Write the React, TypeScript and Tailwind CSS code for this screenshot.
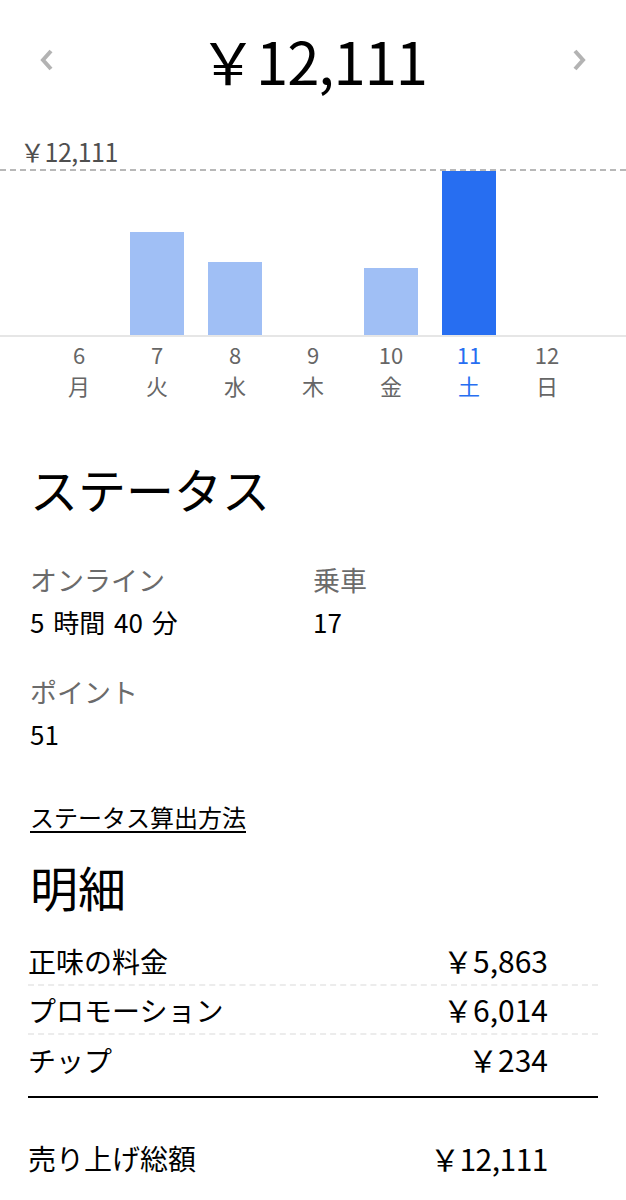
import React from 'react';

type Day = { num: string; name: string; amount: number };

const DAYS: Day[] = [
  { num: '6', name: '月', amount: 0 },
  { num: '7', name: '火', amount: 7600 },
  { num: '8', name: '水', amount: 5390 },
  { num: '9', name: '木', amount: 0 },
  { num: '10', name: '金', amount: 4950 },
  { num: '11', name: '土', amount: 12111 },
  { num: '12', name: '日', amount: 0 },
];

const MAX = 12111;
const CHART_H = 164;
const SELECTED = '11';

const BREAKDOWN = [
  { label: '正味の料金', value: '￥5,863' },
  { label: 'プロモーション', value: '￥6,014' },
  { label: 'チップ', value: '￥234' },
];

const Chevron: React.FC<{ dir: 'left' | 'right' }> = ({ dir }) => (
  <svg width="16" height="22" viewBox="0 0 16 22" fill="none">
    <polyline
      points={dir === 'left' ? '12,2 4,11 12,20' : '4,2 12,11 4,20'}
      stroke="#b3b3b3"
      strokeWidth="4"
      strokeLinejoin="miter"
    />
  </svg>
);

const Chart: React.FC = () => (
  <div className="mt-[17px]">
    <div className="pl-[20px] text-[25px] leading-[28px] text-[#4f4f4f] tracking-[-0.5px]">￥12,111</div>
    <div className="mt-[4px] flex items-end h-[166px] px-[40px] border-t-2 border-dashed border-[#b8b8b8]">
      {DAYS.map(d => (
        <div key={d.num} className="flex-1 flex justify-center">
          {d.amount > 0 && (
            <div
              className={d.num === SELECTED ? 'w-[54px] bg-[#276ef1]' : 'w-[54px] bg-[#a0bff5]'}
              style={{ height: Math.round((d.amount / MAX) * CHART_H) }}
            />
          )}
        </div>
      ))}
    </div>
    <div className="h-[2px] bg-[#e6e6e6]" />
    <div className="grid grid-cols-7 px-[40px] pt-[2px]">
      {DAYS.map(d => (
        <div
          key={d.num}
          className={`flex flex-col items-center text-[22px] leading-[31px] ${d.num === SELECTED ? 'text-[#276ef1]' : 'text-[#666666]'}`}
        >
          <span>{d.num}</span>
          <span>{d.name}</span>
        </div>
      ))}
    </div>
  </div>
);

const Stat: React.FC<{ label: string; value: string }> = ({ label, value }) => (
  <div>
    <div className="text-[27px] leading-[36px] text-[#6b6b6b]">{label}</div>
    <div className="text-[26px] leading-[36px] text-black mt-[6px] [word-spacing:3px]">{value}</div>
  </div>
);

export default function App() {
  return (
    <div className="w-[626px] min-h-[1200px] bg-white text-black" style={{ fontFamily: '"Noto Sans CJK JP", "Noto Sans", sans-serif' }}>
      {/* header */}
      <div className="flex items-center justify-between px-[39px] h-[120px]">
        <Chevron dir="left" />
        <span className="text-[58px] leading-none tracking-[-1px]">￥12,111</span>
        <Chevron dir="right" />
      </div>

      <Chart />

      {/* status */}
      <div className="px-[30px] pt-[57px]">
        <h2 className="text-[48px] leading-[60px]">ステータス</h2>
        <div className="grid grid-cols-2 gap-y-[34px] mt-[44px]">
          <Stat label="オンライン" value="5 時間 40 分" />
          <Stat label="乗車" value="17" />
          <Stat label="ポイント" value="51" />
        </div>
        <div className="mt-[49px]">
          <a className="text-[24px] leading-[32px] underline underline-offset-[4px] text-black">ステータス算出方法</a>
        </div>
      </div>

      {/* breakdown */}
      <div className="px-[28px] pt-[23px]">
        <h2 className="text-[48px] leading-[60px] pl-[2px]">明細</h2>
        <div className="mt-[21px]">
          {BREAKDOWN.map((row, i) => (
            <div
              key={row.label}
              className={`flex justify-between items-center h-[49px] pr-[50px] ${i < BREAKDOWN.length - 1 ? 'border-b-2 border-dashed border-[#ececec]' : ''}`}
            >
              <span className="text-[28px]">{row.label}</span>
              <span className="text-[30px]">{row.value}</span>
            </div>
          ))}
        </div>
        <div className="mt-[12px] border-t-2 border-black" />
        <div className="flex justify-between items-center h-[60px] mt-[30px] pr-[50px]">
          <span className="text-[28px]">売り上げ総額</span>
          <span className="text-[30px] tracking-[-0.5px]">￥12,111</span>
        </div>
      </div>
    </div>
  );
}
